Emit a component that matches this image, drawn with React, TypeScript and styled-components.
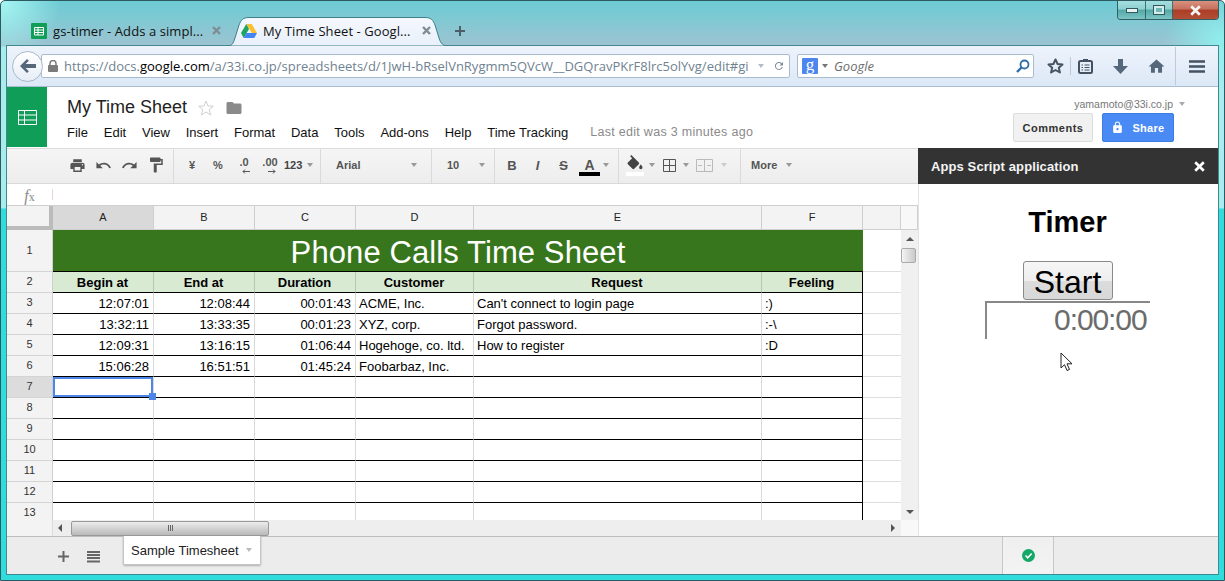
import React from "react";
import styled, { createGlobalStyle } from "styled-components";

const Global = createGlobalStyle`
  html, body { margin: 0; padding: 0; background: #fff; overflow: hidden; }
  * { box-sizing: border-box; }
`;

const Window = styled.div`
  position: relative;
  width: 1225px;
  height: 581px;
  display: flex;
  flex-direction: column;
  overflow: hidden;
  border-radius: 5px 5px 0 0;
  border: 1px solid #2c5a60;
  border-bottom-width: 1px;
  font-family: "Liberation Sans", Arial, sans-serif;
  background:
    radial-gradient(ellipse 60px 60px at 0 0, #a6f6f2 0%, rgba(166, 246, 242, 0) 100%),
    radial-gradient(ellipse 60px 50px at 100% 40px, #8ff0ee 0%, rgba(143, 240, 238, 0) 100%),
    linear-gradient(180deg, #6dcbd4 0, #7fc9d3 18px, #9dc3d1 45px, #a8ecee 46px, #a8ecee 207px, #30dcdc 208px, #30dcdc 100%);
`;

const TitleStrip = styled.div`
  height: 45px;
  flex: none;
  display: flex;
  align-items: flex-end;
  padding-left: 23px;
  padding-right: 5px;
`;

const Tab = styled.div<{ $w: number; $active?: boolean }>`
  position: relative;
  width: ${(p) => p.$w}px;
  height: 29px;
  display: flex;
  align-items: center;
  gap: 6px;
  padding: 0 0 2px ${(p) => (p.$active ? 9 : 7)}px;
  font-family: "Open Sans", "Noto Sans", sans-serif;
  font-size: 13px;
  letter-spacing: 0.08px;
  color: #111;
`;

const TabShape = styled.svg`
  position: absolute;
  left: -5px;
  top: 0;
  width: 224px;
  height: 29px;
`;

const TabTitle = styled.span<{ $w: number }>`
  position: relative;
  width: ${(p) => p.$w}px;
  white-space: nowrap;
  overflow: hidden;
`;

const TabClose = styled.svg<{ $ml: number }>`
  position: relative;
  width: 9px;
  height: 9px;
  margin-left: ${(p) => p.$ml}px;
`;

const PlusTab = styled.svg`
  width: 12px;
  height: 12px;
  margin: 0 0 9px 9px;
`;

const WinControls = styled.div`
  margin-left: auto;
  align-self: flex-start;
  height: 19px;
  width: 102px;
  display: flex;
  border: 1px solid #2f5f63;
  border-top: 0;
  border-radius: 0 0 4px 4px;
  overflow: hidden;
`;

const WinButton = styled.div<{ $w: number; $close?: boolean }>`
  width: ${(p) => p.$w}px;
  display: flex;
  align-items: center;
  justify-content: center;
  border-right: 1px solid rgba(30, 70, 70, 0.7);
  background: ${(p) =>
    p.$close
      ? "linear-gradient(180deg,#d9917f 0,#c5705c 45%,#ad3d26 50%,#b34e36 100%)"
      : "linear-gradient(180deg,#a4dfdf 0,#8fd0d0 45%,#52a8a8 50%,#7cc4c2 100%)"};
  &:last-child { border-right: 0; }
`;

const Inner = styled.div`
  flex: 1;
  min-height: 0;
  margin: 0 6px 6px 6px;
  display: flex;
  flex-direction: column;
  outline: 1px solid #3f8a90;
  background: #fff;
`;

const NavBar = styled.div`
  height: 41px;
  flex: none;
  display: flex;
  align-items: center;
  padding-left: 5px;
  background: linear-gradient(180deg, #eef3fb 0, #dce8f7 100%);
  border-bottom: 1px solid #a9bdd0;
`;

const BackButton = styled.div`
  position: relative;
  z-index: 1;
  width: 31px;
  height: 31px;
  flex: none;
  border-radius: 50%;
  border: 1px solid #a9b8c8;
  background: linear-gradient(180deg, #ffffff, #e6edf6);
  display: flex;
  align-items: center;
  justify-content: center;
`;

const UrlBox = styled.div`
  width: 749px;
  height: 24px;
  margin-left: -2px;
  flex: none;
  display: flex;
  align-items: center;
  background: #fff;
  border: 1px solid #a9bccf;
  border-radius: 2px;
  padding-left: 6px;
`;

const UrlText = styled.div`
  width: 686px;
  margin-left: 6px;
  overflow: hidden;
  white-space: nowrap;
  font-family: "Open Sans", "Noto Sans", sans-serif;
  font-size: 13px;
  color: #6f8291;
`;

const UrlStrong = styled.span`
  color: #000;
`;

const UrlTail = styled.div`
  display: flex;
  align-items: center;
  gap: 9px;
  margin-left: 8px;
`;

const SearchBox = styled.div`
  width: 237px;
  height: 24px;
  margin-left: 7px;
  flex: none;
  display: flex;
  align-items: center;
  background: #fff;
  border: 1px solid #a9bccf;
  border-radius: 2px;
  padding-left: 4px;
`;

const GBadge = styled.div`
  width: 16px;
  height: 16px;
  background: #4c86ee;
  border-radius: 1px;
  color: #fff;
  font-family: "Liberation Serif", serif;
  font-size: 17px;
  line-height: 13px;
  text-align: center;
`;

const SearchHint = styled.span`
  flex: 1;
  margin-left: 6px;
  font-family: "Open Sans", sans-serif;
  font-style: italic;
  font-size: 13px;
  color: #6c6c6c;
`;

const NavIcons = styled.div`
  display: flex;
  align-items: center;
  margin-left: 11px;
`;

const NavIcon = styled.div<{ $w: number }>`
  width: ${(p) => p.$w}px;
  height: 26px;
  display: flex;
  align-items: center;
  justify-content: center;
`;

const NavSep = styled.div<{ $tall?: boolean }>`
  width: 1px;
  height: ${(p) => (p.$tall ? 38 : 18)}px;
  flex: none;
  background: #bccbdc;
`;

const DocsHeader = styled.div`
  height: 61px;
  flex: none;
  display: flex;
`;

const AppTile = styled.div`
  width: 40px;
  height: 60px;
  background: #0f9d58;
  display: flex;
  align-items: center;
  justify-content: center;
`;

const TitleColumn = styled.div`
  padding-left: 20px;
  flex: 1;
`;

const TitleRow = styled.div`
  display: flex;
  align-items: center;
  height: 25px;
  margin-top: 8px;
  font-size: 18px;
  color: #222;
`;

const TitleIcon = styled.svg<{ $ml: number }>`
  margin-left: ${(p) => p.$ml}px;
`;

const MenuRow = styled.div`
  display: flex;
  align-items: center;
  gap: 15.8px;
  height: 22px;
  margin-top: 1px;
  font-size: 13px;
  color: #111;
`;

const LastEdit = styled.span`
  margin-left: 6px;
  color: #8a8a8a;
  font-size: 12.5px;
  letter-spacing: 0.3px;
`;

const AccountColumn = styled.div`
  width: 161px;
  margin-right: 44px;
  display: flex;
  flex-direction: column;
  align-items: flex-end;
`;

const Account = styled.div`
  height: 14px;
  margin-top: 10px;
  margin-right: -11px;
  font-size: 10.5px;
  line-height: 14px;
  color: #777;
  display: flex;
  align-items: center;
  gap: 6px;
`;

const Actions = styled.div`
  display: flex;
  gap: 9px;
  margin-top: 2px;
`;

const CommentsButton = styled.div`
  width: 80px;
  height: 29px;
  background: #f1f1f1;
  border: 1px solid #dcdcdc;
  border-radius: 2px;
  font-size: 11px;
  font-weight: bold;
  letter-spacing: 0.5px;
  color: #333;
  display: flex;
  align-items: center;
  justify-content: center;
`;

const ShareButton = styled.div`
  width: 72px;
  height: 29px;
  background: #4a8af4;
  border: 1px solid #3b7be6;
  border-radius: 2px;
  font-size: 11px;
  font-weight: bold;
  letter-spacing: 0.3px;
  color: #fff;
  display: flex;
  align-items: center;
  justify-content: center;
  gap: 8px;
`;

const Body = styled.div`
  flex: 1;
  min-height: 0;
  display: flex;
`;

const SheetColumn = styled.div`
  width: 911px;
  flex: none;
  display: flex;
  flex-direction: column;
`;

const Toolbar = styled.div`
  height: 36px;
  flex: none;
  display: flex;
  background: linear-gradient(180deg, #f5f5f5, #ededed);
  border-top: 1px solid #dcdcdc;
  border-bottom: 1px solid #d9d9d9;
  color: #555;
  font-size: 11px;
  font-weight: bold;
`;

const ToolGroup = styled.div<{ $w: number; $pl: number; $last?: boolean }>`
  width: ${(p) => p.$w}px;
  flex: ${(p) => (p.$last ? 1 : "none")};
  display: flex;
  align-items: center;
  padding-left: ${(p) => p.$pl}px;
  padding-bottom: 2px;
  border-right: ${(p) => (p.$last ? "0" : "1px solid #dadada")};
`;

const Tool = styled.div<{ $w: number; $dim?: boolean; $ml?: number }>`
  position: relative;
  width: ${(p) => p.$w}px;
  height: 34px;
  flex: none;
  margin-left: ${(p) => p.$ml || 0}px;
  display: flex;
  align-items: center;
  justify-content: center;
  opacity: ${(p) => (p.$dim ? 0.35 : 1)};
`;

const ToolLabel = styled.span<{ $w: number; $color?: string; $ml?: number }>`
  width: ${(p) => p.$w}px;
  flex: none;
  margin-left: ${(p) => p.$ml || 0}px;
  color: ${(p) => p.$color || "#444"};
`;

const Caret = styled.i<{ $c?: string; $ml?: number }>`
  display: block;
  width: 0;
  height: 0;
  flex: none;
  margin-left: ${(p) => p.$ml || 0}px;
  border-left: 3.5px solid transparent;
  border-right: 3.5px solid transparent;
  border-top: 4px solid ${(p) => p.$c || "#999"};
`;

const LetterTool = styled.span<{ $size?: number; $italic?: boolean }>`
  font-size: ${(p) => p.$size || 13}px;
  font-style: ${(p) => (p.$italic ? "italic" : "normal")};
  color: #555;
`;

const StrikeLetter = styled(LetterTool)`
  text-decoration: line-through;
`;

const ColorBar = styled.i<{ $c: string }>`
  position: absolute;
  left: 2px;
  right: 2px;
  bottom: 6px;
  height: 4px;
  background: ${(p) => p.$c};
`;

const DecimalStack = styled.div`
  position: relative;
  height: 18px;
  font-size: 11px;
  line-height: 13px;
  text-align: center;
`;

const DecimalArrow = styled.svg`
  position: absolute;
  left: 50%;
  margin-left: -2px;
  bottom: 0;
`;

const FormulaBar = styled.div`
  height: 22px;
  flex: none;
  display: flex;
  align-items: center;
  background: #fff;
  border-bottom: 1px solid #cfcfcf;
`;

const FxLabel = styled.span`
  width: 45px;
  padding-top: 2px;
  text-align: center;
  font-family: "Liberation Serif", serif;
  font-style: italic;
  font-size: 16px;
  color: #8a8a8a;
`;

const FxSub = styled.span`
  font-size: 12px;
  font-style: normal;
`;

const FxDivider = styled.i`
  width: 1px;
  height: 11px;
  background: #e3d6e0;
`;

const SheetGrid = styled.div`
  display: grid;
  grid-template-columns: 46px 101px 101px 101px 118px 288px 101px 38px 17px;
  grid-template-rows: 24px 42px repeat(12, 21px);
  height: 314px;
  overflow: hidden;
  flex: none;
  position: relative;
  font-size: 13px;
`;

const Corner = styled.div`
  background: #f3f3f3;
  border-right: 4px solid #bbb;
  border-bottom: 4px solid #bbb;
`;

const ColHead = styled.div<{ $sel?: boolean; $blank?: boolean }>`
  background: ${(p) => (p.$sel ? "#d9d9d9" : p.$blank ? "#f8f8f8" : "#f3f3f3")};
  border-right: 1px solid #cfcfcf;
  border-bottom: 1px solid #cfcfcf;
  padding-bottom: 2px;
  font-size: 11px;
  color: #222;
  display: flex;
  align-items: center;
  justify-content: center;
`;

const RowHead = styled.div<{ $sel?: boolean }>`
  background: ${(p) => (p.$sel ? "#dcdcdc" : "#f3f3f3")};
  border-right: 1px solid #cfcfcf;
  border-bottom: 1px solid #d4d4d4;
  padding-bottom: 2px;
  font-size: 11px;
  color: #333;
  display: flex;
  align-items: center;
  justify-content: center;
`;

const BannerCell = styled.div`
  grid-column: span 6;
  background: #38761d;
  border-bottom: 1px solid #000;
  padding-top: 5px;
  color: #fff;
  font-size: 31px;
  letter-spacing: 0.1px;
  display: flex;
  align-items: center;
  justify-content: center;
`;

const Cell = styled.div<{ $align?: string; $head?: boolean; $last?: boolean }>`
  position: relative;
  background: ${(p) => (p.$head ? "#d9ead3" : "#fff")};
  border-right: 1px solid ${(p) => (p.$last ? "#000" : p.$head ? "#b7c8b0" : "#d9d9d9")};
  border-bottom: 1px solid #000;
  padding: 0 4px 0 3px;
  white-space: nowrap;
  overflow: visible;
  line-height: 21px;
  text-align: ${(p) => p.$align || "left"};
  font-weight: ${(p) => (p.$head ? "bold" : "normal")};
  color: #000;
`;

const SelectedCell = styled(Cell)`
  box-shadow: inset 0 0 0 2px #4d86e8;
`;

const FillHandle = styled.i`
  position: absolute;
  right: -3px;
  bottom: -3px;
  width: 7px;
  height: 7px;
  background: #4d86e8;
  z-index: 2;
`;

const SpareCell = styled.div`
  background: #fff;
  border-bottom: 1px solid #dedede;
`;

const VScroll = styled.div`
  grid-column: 9;
  grid-row: 2 / span 13;
  background: #f0f0f0;
  display: flex;
  flex-direction: column;
  align-items: center;
  padding-top: 7px;
`;

const VThumb = styled.div`
  width: 15px;
  height: 15px;
  margin: 7px 2px 0 0;
  border: 1px solid #aaa;
  border-radius: 2px;
  background: linear-gradient(90deg, #f4f4f4, #c9c9c9);
`;

const VDown = styled.i`
  display: block;
  margin-top: auto;
  margin-bottom: 10px;
  border-left: 4px solid transparent;
  border-right: 4px solid transparent;
  border-top: 4px solid #555;
`;

const VUp = styled.i`
  display: block;
  border-left: 4px solid transparent;
  border-right: 4px solid transparent;
  border-bottom: 4px solid #555;
`;

const HScrollRow = styled.div`
  height: 16px;
  flex: none;
  display: flex;
`;

const HScrollLeft = styled.div`
  width: 46px;
  background: #f3f3f3;
  border-right: 1px solid #ddd;
`;

const HTrack = styled.div`
  width: 848px;
  background: #eeeeee;
  display: flex;
  align-items: center;
  padding: 0 6px 0 5px;
`;

const HThumb = styled.div`
  width: 198px;
  height: 15px;
  margin-left: 9px;
  border: 1px solid #999;
  border-radius: 2px;
  background: linear-gradient(180deg, #ececec, #b9b9b9);
  display: flex;
  align-items: center;
  justify-content: center;
  gap: 1px;
`;

const Grip = styled.i`
  width: 1px;
  height: 6px;
  background: #666;
`;

const ArrowLeft = styled.i`
  border-top: 4px solid transparent;
  border-bottom: 4px solid transparent;
  border-right: 4px solid #555;
`;

const ArrowRight = styled.i`
  margin-left: auto;
  border-top: 4px solid transparent;
  border-bottom: 4px solid transparent;
  border-left: 4px solid #555;
`;

const HCorner = styled.div`
  width: 17px;
  background: #f8f8f8;
`;

const SidePanel = styled.div`
  flex: 1;
  background: #fff;
  display: flex;
  flex-direction: column;
  border-left: 1px solid #e3e3e3;
  position: relative;
`;

const PanelHead = styled.div`
  height: 36px;
  flex: none;
  margin-left: -1px;
  background: #333;
  color: #f4f4f4;
  font-size: 13px;
  letter-spacing: 0.1px;
  font-weight: bold;
  display: flex;
  align-items: center;
  justify-content: space-between;
  padding: 0 13px;
`;

const PanelBody = styled.div`
  flex: 1;
  display: flex;
  flex-direction: column;
  align-items: center;
  padding-right: 2px;
`;

const TimerTitle = styled.h1`
  margin: 20px 0 0;
  font-size: 29px;
  line-height: 36px;
  font-weight: bold;
  color: #000;
`;

const StartButton = styled.button`
  margin-top: 21px;
  width: 90px;
  height: 39px;
  padding: 2px 0 0;
  border: 1px solid #8a8a8a;
  border-radius: 3px;
  background: linear-gradient(180deg, #f6f6f6 0, #eeeeee 50%, #dcdcdc 51%, #d8d8d8 100%);
  font-family: "Liberation Sans", sans-serif;
  font-size: 32px;
  line-height: 36px;
  color: #000;
`;

const Elapsed = styled.div`
  width: 165px;
  height: 38px;
  margin-top: 1px;
  margin-left: -1px;
  border-top: 2px solid #888;
  border-left: 2px solid #888;
  text-align: right;
  padding-right: 3px;
  font-size: 30px;
  line-height: 34px;
  letter-spacing: -1.1px;
  color: #6b6b6b;
`;

const Pointer = styled.svg`
  position: absolute;
  left: 141px;
  top: 204px;
`;

const BottomBar = styled.div`
  height: 38px;
  flex: none;
  display: flex;
  align-items: flex-start;
  background: #ececec;
  border-top: 1px solid #bdbdbd;
  position: relative;
`;

const BarIcon = styled.svg<{ $ml: number }>`
  margin: 14px 0 0 ${(p) => p.$ml}px;
`;

const SheetTab = styled.div`
  width: 138px;
  height: 29px;
  margin: -1px 0 0 23px;
  display: flex;
  align-items: center;
  padding-left: 7px;
  gap: 7px;
  background: #fff;
  border: 1px solid #c4c4c4;
  border-top: 0;
  box-shadow: 0 1px 2px rgba(0, 0, 0, 0.25);
  border-radius: 0 0 2px 2px;
  font-size: 13px;
  color: #222;
`;

const StatusCell = styled.div`
  width: 52px;
  height: 37px;
  margin-left: 741px;
  background: linear-gradient(180deg, #efefef, #f3f3f3);
  border-left: 1px solid #c8c8c8;
  border-right: 1px solid #c8c8c8;
  display: flex;
  align-items: center;
  justify-content: center;
`;

const IconSlot = styled.span`
  position: relative;
  display: flex;
`;

const SearchGlass = styled.svg`
  margin-right: 3px;
`;

const Ico = ({ d, size = 16, fill = "#555", vb = 24 }: { d: string; size?: number; fill?: string; vb?: number }) => (
  <svg width={size} height={size} viewBox={`0 0 ${vb} ${vb}`}>
    <path d={d} fill={fill} />
  </svg>
);

const P = {
  print: "M19 8H5c-1.66 0-3 1.34-3 3v6h4v4h12v-4h4v-6c0-1.66-1.34-3-3-3zm-3 11H8v-5h8v5zm3-7c-.55 0-1-.45-1-1s.45-1 1-1 1 .45 1 1-.45 1-1 1zm-1-9H6v4h12V3z",
  undo: "M12.5 8c-2.65 0-5.05.99-6.9 2.6L2 7v9h9l-3.62-3.62c1.39-1.16 3.16-1.88 5.12-1.88 3.54 0 6.55 2.31 7.6 5.5l2.37-.78C21.08 11.03 17.15 8 12.5 8z",
  redo: "M18.4 10.6C16.55 8.99 14.15 8 11.5 8c-4.65 0-8.58 3.03-9.96 7.22L3.9 16c1.05-3.19 4.05-5.5 7.6-5.5 1.95 0 3.73.72 5.12 1.88L13 16h9V7l-3.6 3.6z",
  paint: "M18 4V3c0-.55-.45-1-1-1H5c-.55 0-1 .45-1 1v4c0 .55.45 1 1 1h12c.55 0 1-.45 1-1V6h1v4H9v11c0 .55.45 1 1 1h2c.55 0 1-.45 1-1v-9h8V4h-3z",
  bucket: "M16.56 8.94L7.62 0 6.21 1.41l2.38 2.38-5.15 5.15c-.59.59-.59 1.54 0 2.12l5.5 5.5c.29.29.68.44 1.06.44s.77-.15 1.06-.44l5.5-5.5c.59-.58.59-1.53 0-2.12zM19 11.5s-2 2.17-2 3.5c0 1.1.9 2 2 2s2-.9 2-2c0-1.33-2-3.5-2-3.5z",
  home: "M10 20v-6h4v6h5v-8h3L12 3 2 12h3v8z",
  lock: "M18 8h-1V6c0-2.76-2.24-5-5-5S7 3.24 7 6v2H6c-1.1 0-2 .9-2 2v10c0 1.1.9 2 2 2h12c1.1 0 2-.9 2-2V10c0-1.1-.9-2-2-2zm-6 9c-1.1 0-2-.9-2-2s.9-2 2-2 2 .9 2 2-.9 2-2 2zm3.1-9H8.9V6c0-1.71 1.39-3.1 3.1-3.1 1.71 0 3.1 1.39 3.1 3.1v2z",
  folder: "M10 4H4c-1.1 0-2 .9-2 2v12c0 1.1.9 2 2 2h16c1.1 0 2-.9 2-2V8c0-1.1-.9-2-2-2h-8l-2-2z",
};

const SheetsIcon = () => (
  <svg width="16" height="16" viewBox="0 0 16 16">
    <rect width="16" height="16" rx="1" fill="#0f9d58" />
    <path d="M3.500 4.500h9v7.500h-9zM3.500 7h9M3.500 9.500h9M7 4.500v7.500" fill="none" stroke="#fff" strokeWidth="1" />
  </svg>
);

const DriveIcon = () => (
  <svg width="16" height="14" viewBox="0 0 16 14">
    <polygon points="5.3,0 10.7,0 16,9 10.8,9" fill="#fbc02d" />
    <polygon points="5.3,0 0,9 2.7,14 8,5" fill="#1da462" />
    <polygon points="2.7,14 13.3,14 16,9 5.4,9" fill="#4285f4" />
  </svg>
);

const CloseX = ({ c = "#7f8c93", s = 9, w = 2.4 }: { c?: string; s?: number; w?: number }) => (
  <svg width={s} height={s} viewBox="0 0 9 9">
    <path d="M1 1l7 7M8 1l-7 7" stroke={c} strokeWidth={w} fill="none" />
  </svg>
);

const columns = ["A", "B", "C", "D", "E", "F"];
const heads = ["Begin at", "End at", "Duration", "Customer", "Request", "Feeling"];
const rows = [
  ["12:07:01", "12:08:44", "00:01:43", "ACME, Inc.", "Can't connect to login page", ":)"],
  ["13:32:11", "13:33:35", "00:01:23", "XYZ, corp.", "Forgot password.", ":-\\"],
  ["12:09:31", "13:16:15", "01:06:44", "Hogehoge, co. ltd.", "How to register", ":D"],
  ["15:06:28", "16:51:51", "01:45:24", "Foobarbaz, Inc.", "", ""],
];
const menus = ["File", "Edit", "View", "Insert", "Format", "Data", "Tools", "Add-ons", "Help", "Time Tracking"];

export default function App() {
  return (
    <>
      <Global />
      <Window>
        <TitleStrip>
          <Tab $w={208}>
            <SheetsIcon />
            <TabTitle $w={150}>gs-timer - Adds a simpl...</TabTitle>
            <TabClose $ml={3} viewBox="0 0 9 9"><path d="M1 1l7 7M8 1l-7 7" stroke="#7f8c93" strokeWidth="2.4" /></TabClose>
          </Tab>
          <Tab $w={213} $active>
            <TabShape viewBox="0 0 224 29">
              <defs>
                <linearGradient id="tabfill" x1="0" y1="0" x2="0" y2="1">
                  <stop offset="0" stopColor="#f5f8fd" />
                  <stop offset="1" stopColor="#e9f0fa" />
                </linearGradient>
              </defs>
              <path
                d="M0 29c5 0 6-2 8-8L12 8C14 3 16 .5 22 .5H198c6 0 8 2.5 10 7.500l4 13c2 6 4 8 10 8z"
                fill="url(#tabfill)"
                stroke="#3f8088"
                strokeWidth="1"
              />
            </TabShape>
            <IconSlot><DriveIcon /></IconSlot>
            <TabTitle $w={147}>My Time Sheet - Googl...</TabTitle>
            <TabClose $ml={6} viewBox="0 0 9 9"><path d="M1 1l7 7M8 1l-7 7" stroke="#7f8c93" strokeWidth="2.4" /></TabClose>
          </Tab>
          <PlusTab viewBox="0 0 12 12"><path d="M6 1v10M1 6h10" stroke="#4c5f68" strokeWidth="2" /></PlusTab>
          <WinControls>
            <WinButton $w={29}>
              <svg width="12" height="5"><rect x=".5" y=".5" width="11" height="4" fill="#e8f2f2" stroke="#33585c" /></svg>
            </WinButton>
            <WinButton $w={27}>
              <svg width="12" height="10"><rect x=".5" y=".5" width="11" height="9" fill="#d5ecec" stroke="#33585c" /><rect x="3" y="3" width="6" height="4" fill="#6fb7b7" /></svg>
            </WinButton>
            <WinButton $w={46} $close>
              <CloseX c="#f4f4f4" s={11} w={2.2} />
            </WinButton>
          </WinControls>
        </TitleStrip>
        <Inner>
          <NavBar>
            <BackButton>
              <svg width="16" height="14" viewBox="0 0 16 14">
                <path d="M7 0l1.800 1.800L5.600 5H16v4H5.600l3.200 3.200L7 14 0 7z" fill="#55677a" />
              </svg>
            </BackButton>
            <UrlBox>
              <svg width="10" height="12" viewBox="0 0 10 12">
                <path d="M2 5V3.500a3 3 0 0 1 6 0V5" fill="none" stroke="#7b7b7b" strokeWidth="1.500" />
                <rect y="5" width="10" height="7" rx="1" fill="#7b7b7b" />
              </svg>
              <UrlText>
                https://docs.<UrlStrong>google.com</UrlStrong>/a/33i.co.jp/spreadsheets/d/1JwH-bRselVnRygmm5QVcW__DGQravPKrF8lrc5olYvg/edit#gi
              </UrlText>
              <UrlTail>
                <Caret $c="#b3bcc6" />
                <svg width="12" height="12" viewBox="0 0 24 24">
                  <path d="M17.650 6.350A8 8 0 1 0 19.700 14h-2.100a6 6 0 1 1-1.400-6.200L13 11h7V4z" fill="#7b8a98" />
                </svg>
              </UrlTail>
            </UrlBox>
            <SearchBox>
              <GBadge>g</GBadge>
              <Caret $c="#777" $ml={4} />
              <SearchHint>Google</SearchHint>
              <SearchGlass width="14" height="14" viewBox="0 0 14 14">
                <circle cx="8.500" cy="5.500" r="4" fill="none" stroke="#2f6da8" strokeWidth="1.800" />
                <path d="M5.500 8.500L1 13" stroke="#2f6da8" strokeWidth="2.400" />
              </SearchGlass>
            </SearchBox>
            <NavIcons>
              <NavIcon $w={20}>
                <svg width="17" height="16" viewBox="0 0 17 16">
                  <polygon points="8.500,1.500 10.600,6 15.500,6.500 11.800,9.700 12.900,14.500 8.500,12 4.100,14.500 5.200,9.700 1.500,6.500 6.400,6" fill="none" stroke="#445261" strokeWidth="2" strokeLinejoin="round" />
                </svg>
              </NavIcon>
              <NavIcon $w={10}><NavSep /></NavIcon>
              <NavIcon $w={20}>
                <svg width="15" height="16" viewBox="0 0 15 16">
                  <rect x="1" y="3" width="13" height="12" rx="1.500" fill="none" stroke="#445261" strokeWidth="2" />
                  <rect x="5" y="1" width="5" height="3" fill="#445261" />
                  <path d="M3.500 7h1.500M6.500 7h5M3.500 9.500h1.500M6.500 9.500h5M3.500 12h1.500M6.500 12h5" stroke="#445261" strokeWidth="1.200" />
                </svg>
              </NavIcon>
              <NavIcon $w={50}>
                <svg width="15" height="15" viewBox="0 0 15 15">
                  <path d="M5 0h5v7h5l-7.500 8L0 7h5z" fill="#55677a" />
                </svg>
              </NavIcon>
              <NavIcon $w={22}><Ico d={P.home} size={19} fill="#55677a" /></NavIcon>
              <NavIcon $w={16}><NavSep $tall /></NavIcon>
              <NavIcon $w={28}>
                <svg width="16" height="13" viewBox="0 0 16 13">
                  <path d="M0 1.500h16M0 6.500h16M0 11.500h16" stroke="#445261" strokeWidth="2.600" />
                </svg>
              </NavIcon>
            </NavIcons>
          </NavBar>

          <DocsHeader>
            <AppTile>
              <svg width="19" height="15" viewBox="0 0 19 15">
                <path d="M.5.500h18v14H.5zM.5 5h18M.5 10h18M6.500.5v14" fill="none" stroke="#fff" strokeWidth="1" />
              </svg>
            </AppTile>
            <TitleColumn>
              <TitleRow>
                My Time Sheet
                <TitleIcon $ml={11} width="16" height="16" viewBox="0 0 16 16">
                  <polygon points="8,1 10,6 15.300,6.200 11.200,9.500 12.600,15 8,12 3.400,15 4.800,9.500 .7,6.200 6,6" fill="none" stroke="#cfcfcf" strokeWidth="1" />
                </TitleIcon>
                <TitleIcon $ml={11} width="18" height="18" viewBox="0 0 24 24">
                  <path d={P.folder} fill="#8a8a8a" />
                </TitleIcon>
              </TitleRow>
              <MenuRow>
                {menus.map((m) => (
                  <span key={m}>{m}</span>
                ))}
                <LastEdit>Last edit was 3 minutes ago</LastEdit>
              </MenuRow>
            </TitleColumn>
            <AccountColumn>
              <Account>
                yamamoto@33i.co.jp <Caret $c="#aaa" />
              </Account>
              <Actions>
                <CommentsButton>Comments</CommentsButton>
                <ShareButton>
                  <Ico d={P.lock} size={13} fill="#fff" />
                  Share
                </ShareButton>
              </Actions>
            </AccountColumn>
          </DocsHeader>

          <Body>
            <SheetColumn>
              <Toolbar>
                <ToolGroup $w={167} $pl={57}>
                  <Tool $w={26}><Ico d={P.print} size={17} /></Tool>
                  <Tool $w={26}><Ico d={P.undo} size={17} /></Tool>
                  <Tool $w={27}><Ico d={P.redo} size={17} /></Tool>
                  <Tool $w={26}><Ico d={P.paint} size={18} /></Tool>
                </ToolGroup>
                <ToolGroup $w={147} $pl={5}>
                  <Tool $w={26}>¥</Tool>
                  <Tool $w={26}>%</Tool>
                  <Tool $w={26}>
                    <DecimalStack>
                      .0
                      <DecimalArrow width="8" height="5" viewBox="0 0 8 5"><path d="M8 2.500H1M3 .5L1 2.500l2 2" stroke="#555" fill="none" /></DecimalArrow>
                    </DecimalStack>
                  </Tool>
                  <Tool $w={26}>
                    <DecimalStack>
                      .00
                      <DecimalArrow width="8" height="5" viewBox="0 0 8 5"><path d="M0 2.500h7M5 .5l2 2-2 2" stroke="#555" fill="none" /></DecimalArrow>
                    </DecimalStack>
                  </Tool>
                  <ToolLabel $w={21} $ml={1}>123</ToolLabel>
                  <Caret $ml={2} />
                </ToolGroup>
                <ToolGroup $w={111} $pl={15}>
                  <ToolLabel $w={75} $color="#555">Arial</ToolLabel>
                  <Caret />
                </ToolGroup>
                <ToolGroup $w={63} $pl={15}>
                  <ToolLabel $w={32} $color="#555">10</ToolLabel>
                  <Caret />
                </ToolGroup>
                <ToolGroup $w={124} $pl={4}>
                  <Tool $w={26}><LetterTool>B</LetterTool></Tool>
                  <Tool $w={25}><LetterTool $italic>I</LetterTool></Tool>
                  <Tool $w={27}><StrikeLetter>S</StrikeLetter></Tool>
                  <Tool $w={25}><LetterTool $size={14}>A</LetterTool><ColorBar $c="#000" /></Tool>
                  <Caret $ml={1} />
                </ToolGroup>
                <ToolGroup $w={122} $pl={5}>
                  <Tool $w={22}>
                    <Ico d={P.bucket} size={20} fill="#444" />
                    <ColorBar $c="#fff" />
                  </Tool>
                  <Caret $ml={3} />
                  <Tool $w={27} $ml={1}>
                    <svg width="13" height="13"><path d="M.5.500h12v12H.5zM.5 6.500h12M6.500.5v12" fill="none" stroke="#555" /></svg>
                  </Tool>
                  <Caret />
                  <Tool $w={28} $dim $ml={1}>
                    <svg width="17" height="13"><path d="M.5.500h16v12H.5zM8.500.5v12M2 6.500h4M15 6.500h-4" fill="none" stroke="#555" /></svg>
                  </Tool>
                  <Caret $c="#ccc" $ml={3} />
                </ToolGroup>
                <ToolGroup $w={100} $pl={10} $last>
                  <ToolLabel $w={28} $color="#555">More</ToolLabel>
                  <Caret $ml={7} />
                </ToolGroup>
              </Toolbar>

              <FormulaBar>
                <FxLabel>f<FxSub>x</FxSub></FxLabel>
                <FxDivider />
              </FormulaBar>

              <SheetGrid>
                <Corner />
                {columns.map((c) => (
                  <ColHead key={c} $sel={c === "A"}>{c}</ColHead>
                ))}
                <ColHead />
                <ColHead $blank />

                <RowHead>1</RowHead>
                <BannerCell>Phone Calls Time Sheet</BannerCell>
                <SpareCell />
                <VScroll>
                  <VUp />
                  <VThumb />
                  <VDown />
                </VScroll>

                <RowHead>2</RowHead>
                {heads.map((h, i) => (
                  <Cell key={h} $head $align="center" $last={i === 5}>{h}</Cell>
                ))}
                <SpareCell />

                {Array.from({ length: 11 }, (_, r) => {
                  const n = r + 3;
                  const data = rows[r] || ["", "", "", "", "", ""];
                  return (
                    <React.Fragment key={n}>
                      <RowHead $sel={n === 7}>{n}</RowHead>
                      {data.map((v, i) => {
                        if (n === 7 && i === 0) {
                          return (
                            <SelectedCell key={i}>
                              <FillHandle />
                            </SelectedCell>
                          );
                        }
                        return (
                          <Cell key={i} $align={i < 3 ? "right" : "left"} $last={i === 5}>{v}</Cell>
                        );
                      })}
                      <SpareCell />
                    </React.Fragment>
                  );
                })}
              </SheetGrid>

              <HScrollRow>
                <HScrollLeft />
                <HTrack>
                  <ArrowLeft />
                  <HThumb><Grip /><Grip /><Grip /></HThumb>
                  <ArrowRight />
                </HTrack>
                <HCorner />
              </HScrollRow>
            </SheetColumn>

            <SidePanel>
              <PanelHead>
                Apps Script application
                <CloseX c="#fff" s={11} w={2.2} />
              </PanelHead>
              <PanelBody>
                <TimerTitle>Timer</TimerTitle>
                <StartButton>Start</StartButton>
                <Elapsed>0:00:00</Elapsed>
              </PanelBody>
              <Pointer width="14" height="20" viewBox="0 0 14 20">
                <path d="M1 1v15l3.500-3.300L7 18.500l2.500-1-2.500-5.700h5z" fill="#fff" stroke="#222" strokeWidth="1" />
              </Pointer>
            </SidePanel>
          </Body>

          <BottomBar>
            <BarIcon $ml={51} width="11" height="11" viewBox="0 0 11 11"><path d="M5.500 0v11M0 5.500h11" stroke="#666" strokeWidth="2" /></BarIcon>
            <BarIcon $ml={18} width="13" height="12" viewBox="0 0 13 12"><path d="M0 1h13M0 4h13M0 7h13M0 10.500h13" stroke="#666" strokeWidth="1.800" /></BarIcon>
            <SheetTab>
              Sample Timesheet
              <Caret $c="#bbb" />
            </SheetTab>
            <StatusCell>
              <svg width="13" height="13" viewBox="0 0 13 13">
                <circle cx="6.500" cy="6.500" r="6.500" fill="#12a866" />
                <path d="M3.500 6.500l2.200 2.300 4-4.300" fill="none" stroke="#fff" strokeWidth="1.600" />
              </svg>
            </StatusCell>
          </BottomBar>
        </Inner>
      </Window>
    </>
  );
}
